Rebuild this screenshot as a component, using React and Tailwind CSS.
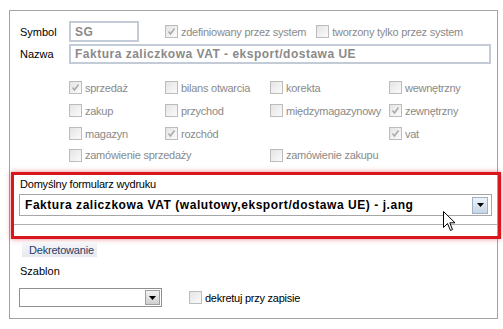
import React from 'react';

const Box = ({ checked }) => (
  <span className="w-[13px] h-[13px] border border-[#bcbcbc] bg-gradient-to-br from-[#e4e4e4] to-[#fbfbfb] flex items-center justify-center shrink-0">
    {checked && (
      <svg width="9" height="9" viewBox="0 0 9 9">
        <path d="M1.5 4.5 L3.5 7 L7.5 1.5" stroke="#a9a9a9" strokeWidth="1.5" fill="none" />
      </svg>
    )}
  </span>
);

const Check = ({ checked, label, dark }) => (
  <div className="flex items-center gap-[3px]">
    <Box checked={checked} />
    <span className={`tracking-[-0.25px] ${dark ? 'text-black' : 'text-[#8a8a8a]'}`}>{label}</span>
  </div>
);

const Arrow = () => (
  <svg width="7" height="4" viewBox="0 0 7 4">
    <path d="M0 0 H7 L3.5 4 Z" fill="#000" />
  </svg>
);

const rows = [
  [
    { label: 'sprzedaż', checked: true },
    { label: 'bilans otwarcia' },
    { label: 'korekta' },
    { label: 'wewnętrzny' },
  ],
  [
    { label: 'zakup' },
    { label: 'przychod' },
    { label: 'międzymagazynowy' },
    { label: 'zewnętrzny', checked: true },
  ],
  [
    { label: 'magazyn' },
    { label: 'rozchód', checked: true },
    null,
    { label: 'vat', checked: true },
  ],
];

export default function App() {
  return (
    <div className="relative w-[503px] h-[329px] bg-white overflow-hidden font-['Liberation_Sans',Arial,sans-serif] text-[11px] leading-[14px] text-black">
      <div className="ml-[9px] mt-[10px] w-[489px] h-[309px] border border-[#a3a3a3] pt-[10px]">
        {/* Symbol */}
        <div className="flex items-center pl-[10px] h-[21px]">
          <span className="w-[49px]">Symbol</span>
          <div className="w-[70px] h-[21px] border-2 border-[#c3cbd6] flex items-center pl-[4px] font-bold text-[12px] tracking-[0.5px] text-[#8a8a8a]">
            SG
          </div>
          <div className="ml-[26px]">
            <Check checked label="zdefiniowany przez system" />
          </div>
          <div className="ml-[10px]">
            <Check label="tworzony tylko przez system" />
          </div>
        </div>
        {/* Nazwa */}
        <div className="flex items-center pl-[10px] mt-[2px] h-[20px]">
          <span className="w-[49px]">Nazwa</span>
          <div className="w-[422px] h-[20px] border-2 border-[#c3cbd6] flex items-center pl-[4px] font-bold text-[12px] tracking-[0.5px] text-[#8a8a8a]">
            Faktura zaliczkowa VAT - eksport/dostawa UE
          </div>
        </div>

        {/* flags */}
        <div className="ml-[59px] mt-[12px]">
          {rows.map((row, i) => (
            <div key={i} className="grid grid-cols-[96px_105px_119px_1fr] h-[23px] items-center">
              {row.map((c, j) => (
                <div key={j}>{c && <Check checked={c.checked} label={c.label} />}</div>
              ))}
            </div>
          ))}
          <div className="grid grid-cols-[201px_1fr] h-[20px] items-center">
            <Check label="zamówienie sprzedaży" />
            <Check label="zamówienie zakupu" />
          </div>
        </div>

        {/* highlighted print form */}
        <div className="ml-[1px] mr-[-4px] mt-[7px] h-[67px] border-[3px] border-[#d7161e] shadow-[0_0_5px_rgba(215,22,30,0.5)] pt-[2px]">
          <div className="pl-[6px] tracking-[-0.2px]">Domyślny formularz wydruku</div>
          <div className="ml-[5px] mt-[3px] w-[473px] h-[22px] border border-[#a6a6a6] bg-white flex items-center pl-[5px] pr-[3px]">
            <span className="flex-1 font-bold text-[12px] tracking-[0.55px]">Faktura zaliczkowa VAT (walutowy,eksport/dostawa UE) - j.ang</span>
            <div className="w-[16px] h-[17px] border border-[#9fb2c8] bg-gradient-to-b from-[#eef3f9] to-[#c7d5e6] flex items-center justify-center">
              <Arrow />
            </div>
          </div>
          <div className="mt-[8px] border-t border-[#b0b0b0]" />
        </div>

        {/* Dekretowanie */}
        <div className="ml-[12px] mt-[3px] w-[75px] h-[15px] bg-gradient-to-b from-[#f6f7f9] to-[#e6e9ef] pl-[7px] text-[#2a3d66] flex items-center tracking-[-0.2px]">
          Dekretowanie
        </div>
        <div className="pl-[10px] mt-[7px]">Szablon</div>
        <div className="flex items-center pl-[9px] mt-[10px]">
          <div className="w-[143px] h-[19px] border border-[#8f8f8f] bg-white flex items-center justify-end pr-[1px]">
            <div className="w-[15px] h-[15px] border border-[#a0a0a0] bg-gradient-to-b from-[#f3f3f3] to-[#cfcfcf] flex items-center justify-center">
              <Arrow />
            </div>
          </div>
          <div className="ml-[27px]">
            <Check dark label="dekretuj przy zapisie" />
          </div>
        </div>
      </div>

      {/* mouse cursor */}
      <svg className="absolute left-[443px] top-[211px]" width="13" height="21" viewBox="0 0 13 21">
        <path d="M0.5 0.5 V16.5 L4.5 12.5 L7.5 19.5 L9.5 18.5 L6.8 11.8 L12 11.8 Z" fill="#fff" stroke="#000" strokeWidth="1" strokeLinejoin="round" />
      </svg>
    </div>
  );
}
